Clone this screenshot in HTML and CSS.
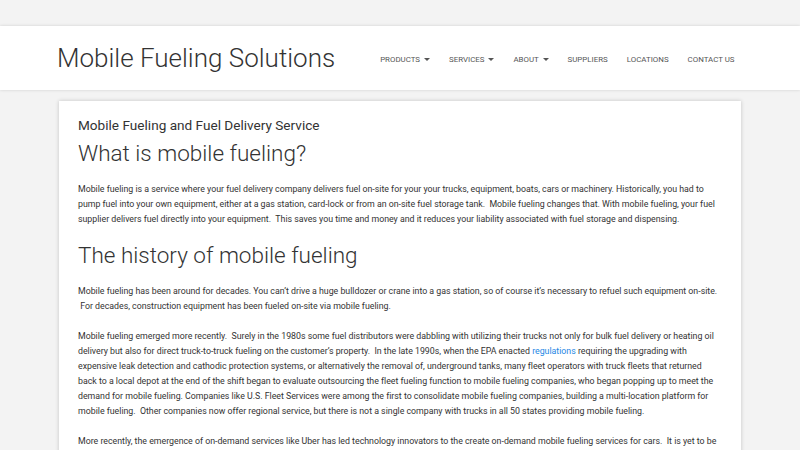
FILE: index.html
```html
<!DOCTYPE html>
<html lang="en">
<head>
  <meta charset="UTF-8">
  <title>Mobile Fueling Solutions</title>
  <link rel="stylesheet" href="styles.css">
</head>
<body>
  <div class="topbar"></div>

  <!-- Header -->
  <header class="site-header">
    <div class="container header-inner">
      <a class="brand" href="#">Mobile Fueling Solutions</a>
      <ul class="nav">
        <li><a href="#">Products <span class="caret"></span></a></li>
        <li><a href="#">Services <span class="caret"></span></a></li>
        <li><a href="#">About <span class="caret"></span></a></li>
        <li><a href="#">Suppliers</a></li>
        <li><a href="#">Locations</a></li>
        <li><a href="#">Contact Us</a></li>
      </ul>
    </div>
  </header>

  <!-- Content -->
  <div class="container">
    <div class="card">
      <h3 class="kicker">Mobile Fueling and Fuel Delivery Service</h3>
      <h1>What is mobile fueling?</h1>
      <p>Mobile fueling is a service where your fuel delivery company delivers fuel on-site for your your trucks, equipment, boats, cars or machinery. Historically, you had to pump fuel into your own equipment, either at a gas station, card-lock or from an on-site fuel storage tank. &nbsp;Mobile fueling changes that. With mobile fueling, your fuel supplier delivers fuel directly into your equipment. &nbsp;This saves you time and money and it reduces your liability associated with fuel storage and dispensing.</p>

      <h1>The history of mobile fueling</h1>
      <p>Mobile fueling has been around for decades. You can’t drive a huge bulldozer or crane into a gas station, so of course it’s necessary to refuel such equipment on-site. &nbsp;For decades, construction equipment has been fueled on-site via mobile fueling.</p>
      <p>Mobile fueling emerged more recently. &nbsp;Surely in the 1980s some fuel distributors were dabbling with utilizing their trucks not only for bulk fuel delivery or heating oil delivery but also for direct truck-to-truck fueling on the customer’s property. &nbsp;In the late 1990s, when the EPA enacted <a href="#">regulations</a> requiring the upgrading with expensive leak detection and cathodic protection systems, or alternatively the removal of, underground tanks, many fleet operators with truck fleets that returned back to a local depot at the end of the shift began to evaluate outsourcing the fleet fueling function to mobile fueling companies, who began popping up to meet the demand for mobile fueling. Companies like U.S. Fleet Services were among the first to consolidate mobile fueling companies, building a multi-location platform for mobile fueling. &nbsp;Other companies now offer regional service, but there is not a single company with trucks in all 50 states providing mobile fueling.</p>
      <p>More recently, the emergence of on-demand services like Uber has led technology innovators to the create on-demand mobile fueling services for cars. &nbsp;It is yet to be seen whether consumers will embrace mobile fueling for their personal vehicles.</p>
    </div>
  </div>
</body>
</html>
```

FILE: styles.css
```css
* { box-sizing: border-box; }
body {
  font-family: Roboto, 'Liberation Sans', sans-serif;
  background: #f3f3f3;
  color: #333;
  margin: 0;
  padding: 0;
}

a {
  color: #1e88e5;
  text-decoration: none;
}

.topbar {
  height: 26px;
}

.container {
  width: 682px;
  margin: 0 auto;
}

.site-header {
  background: #fff;
  height: 64px;
  box-shadow: 0 0 3px rgba(0,0,0,0.15);
}

.header-inner {
  display: flex;
  align-items: center;
  justify-content: space-between;
  height: 100%;
}

.brand {
  margin-left: -2px;
  font-size: 26px;
  font-weight: 300;
  color: #333;
  white-space: nowrap;
}

.nav {
  display: flex;
  list-style: none;
  margin: 2px -3px 0 0;
  padding: 0;
}

.nav a {
  display: block;
  padding: 0 9.5px;
  font-size: 7.9px;
  text-transform: uppercase;
  color: #555;
  white-space: nowrap;
}

.caret {
  display: inline-block;
  width: 0;
  height: 0;
  margin-left: 2px;
  vertical-align: middle;
  border-top: 3px solid #555;
  border-left: 3px solid transparent;
  border-right: 3px solid transparent;
}

.card {
  background: #fff;
  margin-top: 11px;
  padding: 10px 19px 20px;
  box-shadow: 0 0 4px rgba(0,0,0,0.2);
}

.kicker {
  font-size: 13.6px;
  line-height: 20px;
  font-weight: 400;
  margin: 4px 0 4px;
}

h1 {
  font-size: 22.5px;
  line-height: 28px;
  font-weight: 300;
  margin: 0 0 15px;
}

p + h1 {
  margin-top: -1px;
}

p {
  font-size: 8.8px;
  line-height: 15px;
  letter-spacing: -0.01px;
  margin: 0 0 15px;
}
```
